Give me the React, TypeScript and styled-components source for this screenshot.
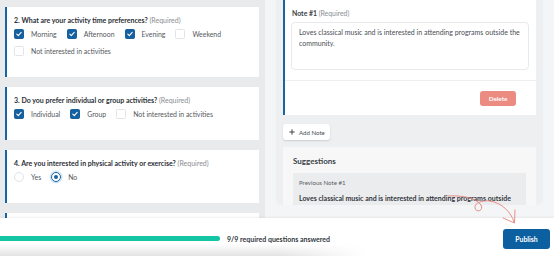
import React from "react";
import styled, { createGlobalStyle } from "styled-components";
import { Plus } from "lucide-react";

const GlobalStyle = createGlobalStyle`
  body {
    margin: 0;
    font-family: "Lato", "Liberation Sans", sans-serif;
    background: #f4f5f7;
    overflow: hidden;
  }
`;

const Page = styled.div`
  position: relative;
  width: 554px;
  height: 256px;
  display: grid;
  grid-template-columns: 265px 1fr;
  grid-template-rows: 218px 38px;
  overflow: hidden;
  background: #f4f5f7;
`;

const LeftCol = styled.div`
  background: #e9eaec;
  padding: 7px 6px 0 5px;
  display: flex;
  flex-direction: column;
  gap: 10px;
  overflow: hidden;
`;

const Card = styled.div`
  flex: none;
  background: #fff;
  border-left: 2px solid #1a64a3;
  padding: 8.5px 7px 21.5px;
`;

const Question = styled.div`
  font-size: 7px;
  line-height: 9px;
  font-weight: 700;
  color: #2c3036;
  margin-bottom: 4px;
  span {
    font-weight: 400;
    color: #8a8d92;
  }
`;

const Options = styled.div`
  display: flex;
  flex-wrap: wrap;
  column-gap: 10px;
  row-gap: 7px;
`;

const Option = styled.div`
  display: flex;
  align-items: center;
  gap: 7px;
  height: 10px;
  font-size: 6.9px;
  color: #54585e;
`;

const Box = styled.div<{ $on?: boolean }>`
  width: 10px;
  height: 10px;
  box-sizing: border-box;
  border-radius: 1.5px;
  background: ${(p) => (p.$on ? "#15609f" : "#fff")};
  border: 1px solid ${(p) => (p.$on ? "#15609f" : "#e2e4e8")};
  display: flex;
  align-items: center;
  justify-content: center;
`;

const Radio = styled.div<{ $on?: boolean }>`
  width: 10px;
  height: 10px;
  box-sizing: border-box;
  border-radius: 50%;
  border: 1px solid ${(p) => (p.$on ? "#1a64a3" : "#e2e4e8")};
  box-shadow: ${(p) => (p.$on ? "0 0 0 1.5px #cfe4f4" : "none")};
  display: flex;
  align-items: center;
  justify-content: center;
  &::after {
    content: "";
    display: ${(p) => (p.$on ? "block" : "none")};
    width: 4px;
    height: 4px;
    border-radius: 50%;
    background: #1a64a3;
  }
`;

const RightCol = styled.div`
  padding-left: 11px;
  overflow: hidden;
`;

const Panel = styled.div`
  width: 267px;
  height: 205px;
  box-sizing: border-box;
  background: #eeeff1;
  border-radius: 0 0 6px 6px;
  padding: 0 7px;
  overflow: hidden;
`;

const NoteCard = styled.div`
  background: #fff;
  border-left: 2px solid #1a64a3;
  padding-top: 8.5px;
`;

const NoteLabel = styled.div`
  font-size: 6.9px;
  line-height: 9px;
  font-weight: 700;
  color: #3a3e44;
  padding-left: 7px;
  margin-bottom: 4.5px;
  span {
    font-weight: 400;
    color: #8a8d92;
  }
`;

const NoteBox = styled.div`
  margin: 0 7px 0 6px;
  height: 48px;
  box-sizing: border-box;
  border: 1px solid #e7e9ec;
  border-radius: 4px;
  padding: 3.5px 7px;
  font-size: 7px;
  line-height: 11px;
  color: #4a4e54;
`;

const NoteFooter = styled.div`
  margin-top: 10px;
  border-top: 1px solid #eceef0;
  height: 34px;
  display: flex;
  align-items: center;
  justify-content: flex-end;
  padding-right: 20px;
`;

const DeleteButton = styled.button`
  width: 36px;
  height: 15px;
  border: none;
  border-radius: 3px;
  background: #ec8b82;
  color: #fff;
  font-family: inherit;
  font-size: 6.3px;
  font-weight: 700;
  padding: 0;
`;

const AddNote = styled.button`
  margin-top: 9px;
  height: 16px;
  width: 47px;
  border: none;
  border-radius: 3px;
  background: #fff;
  box-shadow: 0 1px 2px rgba(0, 0, 0, 0.14);
  display: flex;
  align-items: center;
  gap: 3px;
  padding: 0 0 0 5px;
  font-family: inherit;
  font-size: 6.1px;
  color: #4a4e54;
`;

const Suggestions = styled.div`
  margin-top: 7px;
  background: #f7f7f8;
  padding: 9px 10px;
`;

const SuggestTitle = styled.div`
  font-size: 8px;
  line-height: 10px;
  font-weight: 700;
  color: #3a3f48;
`;

const PrevBox = styled.div`
  margin-top: 7px;
  background: #ebecee;
  padding: 6px 6px;
`;

const PrevLabel = styled.div`
  font-size: 6.1px;
  line-height: 8px;
  color: #5a5e64;
`;

const PrevText = styled.div`
  margin-top: 6px;
  font-size: 7px;
  line-height: 10px;
  font-weight: 700;
  color: #33373d;
`;

const BottomBar = styled.div`
  grid-column: 1 / -1;
  position: relative;
  z-index: 1;
  display: flex;
  align-items: center;
  padding: 3px 4px 0 0;
  background: linear-gradient(to right, rgba(255, 255, 255, 0) 50%, #fff 66%),
    linear-gradient(#fff 68%, #e3e3e3 100%);
  box-shadow: 0 -1px 2px rgba(0, 0, 0, 0.06);
`;

const Progress = styled.div`
  width: 220px;
  height: 5px;
  border-radius: 0 3px 3px 0;
  background: #13c5a5;
  flex: none;
`;

const ProgressText = styled.div`
  margin-left: 7px;
  font-size: 7px;
  font-weight: 700;
  color: #33373d;
  flex: 1;
`;

const Publish = styled.button`
  width: 47px;
  height: 20px;
  border: none;
  border-radius: 3px;
  background: #0c609f;
  color: #fff;
  font-family: inherit;
  font-size: 6.9px;
  font-weight: 700;
  padding: 0;
`;

const Arrow = styled.svg`
  position: absolute;
  left: 0;
  top: 0;
  z-index: 2;
  pointer-events: none;
`;

const Check = () => (
  <svg width="8" height="8" viewBox="0 0 8 8">
    <path d="M1.8 4.2 L3.3 5.6 L6.2 2.4" fill="none" stroke="#fff" strokeWidth="1.1" strokeLinecap="round" strokeLinejoin="round" />
  </svg>
);

const CheckOption = ({ label, on }: { label: string; on?: boolean }) => (
  <Option>
    <Box $on={on}>{on && <Check />}</Box>
    {label}
  </Option>
);

const RadioOption = ({ label, on }: { label: string; on?: boolean }) => (
  <Option>
    <Radio $on={on} />
    {label}
  </Option>
);

export default function App() {
  return (
    <>
      <GlobalStyle />
      <Page>
        <LeftCol>
          <Card>
            <Question>
              2. What are your activity time preferences? <span>(Required)</span>
            </Question>
            <Options>
              <CheckOption label="Morning" on />
              <CheckOption label="Afternoon" on />
              <CheckOption label="Evening" on />
              <CheckOption label="Weekend" />
              <CheckOption label="Not interested in activities" />
            </Options>
          </Card>
          <Card>
            <Question>
              3. Do you prefer individual or group activities? <span>(Required)</span>
            </Question>
            <Options>
              <CheckOption label="Individual" on />
              <CheckOption label="Group" on />
              <CheckOption label="Not interested in activities" />
            </Options>
          </Card>
          <Card>
            <Question>
              4. Are you interested in physical activity or exercise? <span>(Required)</span>
            </Question>
            <Options>
              <RadioOption label="Yes" />
              <RadioOption label="No" on />
            </Options>
          </Card>
          <Card />
        </LeftCol>

        <RightCol>
          <Panel>
            <NoteCard>
              <NoteLabel>
                Note #1 <span>(Required)</span>
              </NoteLabel>
              <NoteBox>
                Loves classical music and is interested in attending programs outside the community.
              </NoteBox>
              <NoteFooter>
                <DeleteButton>Delete</DeleteButton>
              </NoteFooter>
            </NoteCard>
            <AddNote>
              <Plus size={8} strokeWidth={2.6} color="#2c3036" />
              Add Note
            </AddNote>
            <Suggestions>
              <SuggestTitle>Suggestions</SuggestTitle>
              <PrevBox>
                <PrevLabel>Previous Note #1</PrevLabel>
                <PrevText>
                  Loves classical music and is interested in attending programs outside the community.
                </PrevText>
              </PrevBox>
            </Suggestions>
          </Panel>
        </RightCol>

        <BottomBar>
          <Progress />
          <ProgressText>9/9 required questions answered</ProgressText>
          <Publish>Publish</Publish>
        </BottomBar>

        <Arrow width="554" height="256" viewBox="0 0 554 256">
          <path
            d="M448 196 C462 195 476 198 481 205 C484 211 476 213 475 208 C474 203 482 200 490 201 C502 203 511 212 514 222"
            fill="none"
            stroke="#e5837a"
            strokeWidth="0.9"
            strokeLinecap="round"
          />
          <path d="M503 218 L514.5 223 L515 210" fill="none" stroke="#e5837a" strokeWidth="0.9" strokeLinecap="round" strokeLinejoin="round" />
        </Arrow>
      </Page>
    </>
  );
}
